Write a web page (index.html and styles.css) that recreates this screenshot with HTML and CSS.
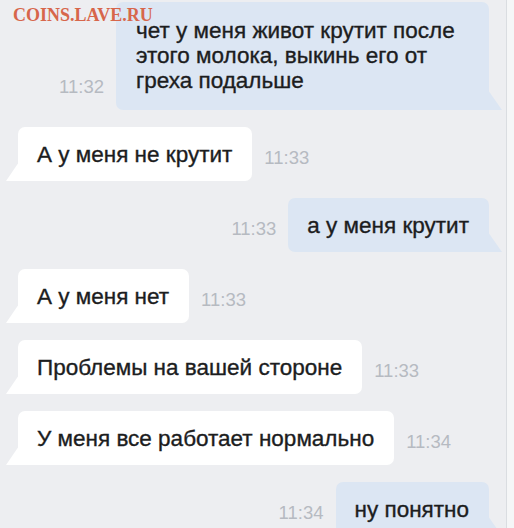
FILE: index.html
```html
<!DOCTYPE html>
<html lang="ru">
<head>
<meta charset="utf-8">
<link rel="stylesheet" href="styles.css">
</head>
<body>
<div class="screen">
  <div class="watermark">COINS.LAVE.RU</div>
  <div class="chat">
    <div class="row row-out">
      <span class="time">11:32</span>
      <div class="bubble bubble-out bubble-wide">чет у меня живот крутит после этого молока, выкинь его от греха подальше</div>
    </div>
    <div class="row row-in">
      <div class="bubble bubble-in">А у меня не крутит</div>
      <span class="time">11:33</span>
    </div>
    <div class="row row-out">
      <span class="time">11:33</span>
      <div class="bubble bubble-out">а у меня крутит</div>
    </div>
    <div class="row row-in">
      <div class="bubble bubble-in">А у меня нет</div>
      <span class="time">11:33</span>
    </div>
    <div class="row row-in">
      <div class="bubble bubble-in">Проблемы на вашей стороне</div>
      <span class="time">11:33</span>
    </div>
    <div class="row row-in">
      <div class="bubble bubble-in">У меня все работает нормально</div>
      <span class="time">11:34</span>
    </div>
    <div class="row row-out">
      <span class="time">11:34</span>
      <div class="bubble bubble-out">ну понятно</div>
    </div>
  </div>
</div>
</body>
</html>
```

FILE: styles.css
```css
* { box-sizing: border-box; }
html, body {
  margin: 0;
  padding: 0;
  background: #f5f6f7;
  overflow: hidden;
}
.screen {
  position: relative;
  width: 507px;
  height: 528px;
  background: #edeef1;
  border-right: 1px solid #dadde1;
  overflow: hidden;
}
.watermark {
  position: absolute;
  left: 13px;
  top: 5px;
  font-family: "Liberation Serif", serif;
  font-weight: bold;
  font-size: 18px;
  color: #d7664b;
  z-index: 2;
}
.chat {
  display: flex;
  flex-direction: column;
  gap: 17px;
  padding: 2px 17px 0 18px;
}
.row {
  display: flex;
  align-items: flex-end;
  gap: 12px;
}
.row-out { justify-content: flex-end; }
.row-in { justify-content: flex-start; }
.bubble {
  position: relative;
  font-family: "Liberation Sans", Arial, sans-serif;
  font-size: 22.5px;
  line-height: 25px;
  color: #1c1d1e;
  -webkit-text-stroke: 0.35px #1c1d1e;
  padding: 15px 20px 14px 19px;
  border-radius: 7px;
}
.bubble-wide {
  max-width: 373px;
  padding: 16px 18px 17px 20px;
}
.bubble-in {
  background: #ffffff;
  border-bottom-left-radius: 0;
}
.bubble-out {
  background: #dce6f3;
  border-bottom-right-radius: 0;
}
.bubble-in::before {
  content: "";
  position: absolute;
  left: -12px;
  bottom: 0;
  width: 13px;
  height: 19px;
  background: #ffffff;
  clip-path: polygon(100% 0, 100% 100%, 0 100%);
}
.bubble-out::after {
  content: "";
  position: absolute;
  right: -13px;
  bottom: 0;
  width: 14px;
  height: 20px;
  background: #dce6f3;
  clip-path: polygon(0 0, 100% 100%, 0 100%);
}
.time {
  font-family: "Liberation Sans", Arial, sans-serif;
  font-size: 18.5px;
  line-height: 20px;
  color: #b6bac1;
  margin-bottom: 13px;
}
```
